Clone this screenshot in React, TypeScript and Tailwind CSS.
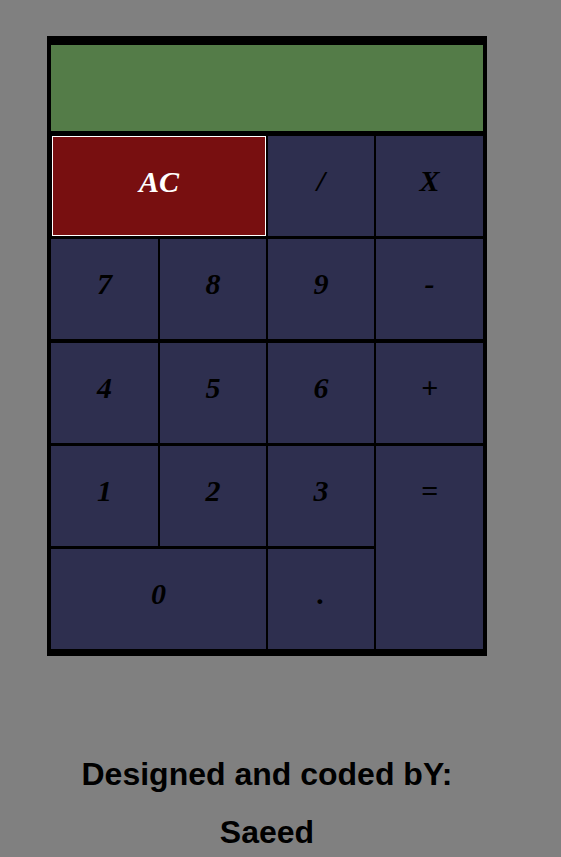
export default function App() {
  const keys: { label: string; span?: string; red?: boolean }[] = [
    { label: "AC", span: "col-span-2", red: true },
    { label: "/" },
    { label: "X" },
    { label: "7" },
    { label: "8" },
    { label: "9" },
    { label: "-" },
    { label: "4" },
    { label: "5" },
    { label: "6" },
    { label: "+" },
    { label: "1" },
    { label: "2" },
    { label: "3" },
    { label: "=", span: "row-span-2" },
    { label: "0", span: "col-span-2" },
    { label: "." },
  ];

  return (
    <div className="min-h-screen bg-[#808080] pt-[36px] pb-[21px]">
      {/* CALCULATOR */}
      <div className="ml-[47px] w-[440px] border-4 border-black bg-black pt-[5px] pb-[3px]">
        {/* DISPLAY */}
        <div className="h-[86px] bg-[#547c48] mb-[5px]"></div>

        {/* KEYS */}
        <div className="grid grid-cols-[107px_106px_106px_107px] auto-rows-[100px] gap-x-[2px] gap-y-[3.25px]">
          {keys.map((k) => (
            <div
              key={k.label}
              className={`${k.span ?? ""} ${
                k.red
                  ? "bg-[#780f10] text-white border border-white ml-[1px]"
                  : "bg-[#2e2f4f] text-black"
              } flex justify-center pt-[29px] text-[30px] leading-[32px] font-bold italic font-['Liberation_Serif',serif]`}
            >
              {k.label}
            </div>
          ))}
        </div>
      </div>

      {/* FOOTER */}
      <div className="ml-[47px] w-[440px] text-center font-['Liberation_Sans',Arial,sans-serif] text-black">
        <h1 className="mt-[100px] mb-[21px] text-[32px] leading-[37px] font-bold">
          Designed and coded bY:
        </h1>
        <h1 className="text-[32px] leading-[37px] font-bold">Saeed</h1>
      </div>
    </div>
  );
}
